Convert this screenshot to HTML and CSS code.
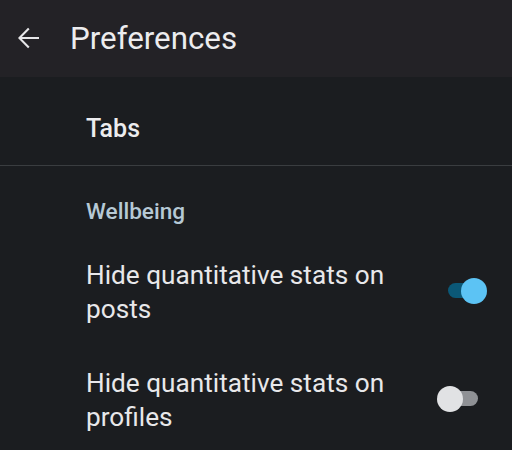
FILE: index.html
```html
<!DOCTYPE html>
<html>
<head>
<meta charset="utf-8">
<link rel="stylesheet" href="styles.css">
</head>
<body>
<div class="app">
  <header class="topbar">
    <svg class="back" width="22" height="22" viewBox="0 0 22 22" aria-hidden="true">
      <path d="M1.6 11 H21 M10.8 1.4 L1.4 11 L10.8 20.6" fill="none" stroke="#e6e6e8" stroke-width="2.1" stroke-linejoin="miter"/>
    </svg>
    <h1 class="title">Preferences</h1>
  </header>
  <main class="content">
    <div class="tabs-row">Tabs</div>
    <div class="divider"></div>
    <div class="section-label">Wellbeing</div>
    <div class="pref-row first">
      <div class="pref-text">Hide quantitative stats on posts</div>
      <div class="switch on"><span class="track"></span><span class="thumb"></span></div>
    </div>
    <div class="pref-row">
      <div class="pref-text">Hide quantitative stats on profiles</div>
      <div class="switch"><span class="track"></span><span class="thumb"></span></div>
    </div>
  </main>
</div>
</body>
</html>
```

FILE: styles.css
```css
html, body {
  margin: 0;
  padding: 0;
  background: #1b1d20;
}
.app {
  width: 512px;
  height: 450px;
  overflow: hidden;
  font-family: Roboto, "Noto Sans", sans-serif;
  color: #e8e8ea;
}
.topbar {
  height: 77px;
  background: #232226;
  display: flex;
  align-items: center;
  padding-left: 18px;
  box-sizing: border-box;
}
.back {
  flex: none;
  display: block;
  margin-top: -1px;
}
.title {
  margin: 0 0 0 30px;
  font-size: 31.3px;
  font-weight: 400;
  line-height: 36px;
  color: #ececee;
}
.content {
  display: flex;
  flex-direction: column;
}
.tabs-row {
  padding: 36px 0 20px 86px;
  font-size: 25px;
  font-weight: 500;
  line-height: 32px;
  color: #ececee;
}
.divider {
  height: 1px;
  background: #3a3d40;
}
.section-label {
  padding: 32px 0 0 86px;
  font-size: 22.6px;
  font-weight: 500;
  line-height: 28px;
  color: #b6c9d5;
}
.pref-row {
  display: flex;
  align-items: center;
  padding: 0 25px 0 86px;
  margin-top: 40px;
  gap: 40px;
}
.pref-row.first {
  margin-top: 32px;
}
.pref-text {
  flex: 1;
  font-size: 26.2px;
  font-weight: 400;
  line-height: 34px;
  color: #e8e8ea;
}
.switch {
  flex: none;
  position: relative;
  width: 50px;
  height: 26px;
  margin-top: -2px;
}
.track {
  position: absolute;
  left: 11px;
  top: 5px;
  width: 30px;
  height: 15px;
  border-radius: 8px;
  background: #8f9195;
}
.thumb {
  position: absolute;
  left: 0;
  top: 0;
  width: 26px;
  height: 26px;
  border-radius: 50%;
  background: #e1e2e4;
}
.switch.on .track {
  background: #0b5877;
}
.switch.on .thumb {
  left: 24px;
  background: #5cc3f4;
}
```
